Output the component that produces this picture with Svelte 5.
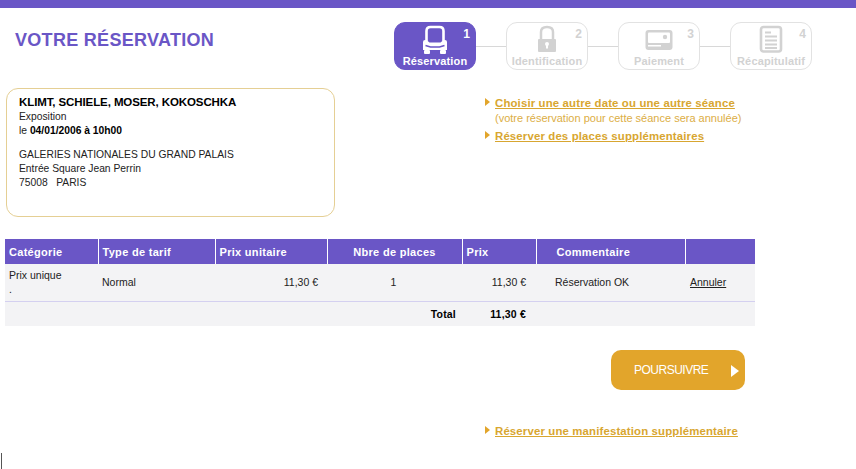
<script>
  const steps = [
    { n: 1, label: "Réservation", icon: "seat" },
    { n: 2, label: "Identification", icon: "lock" },
    { n: 3, label: "Paiement", icon: "card" },
    { n: 4, label: "Récapitulatif", icon: "doc" }
  ];
</script>

<div class="page">
  <div class="topbar"></div>

  <header class="head">
    <h1>VOTRE RÉSERVATION</h1>
    <ol class="steps">
      {#each steps as step, i}
        {#if i > 0}<li class="line" aria-hidden="true"></li>{/if}
        <li class="step" class:active={i === 0}>
          <span class="num">{step.n}</span>
          <svg class="icon" viewBox="0 0 28 30" width="28" height="30" fill="none" stroke="currentColor">
            {#if step.icon === "seat"}
              <path d="M5.500 17V7q0-4 4-4h9q4 0 4 4v10" stroke-width="2.600" />
              <path d="M2 18q0-2 2-2h1.500l3 2.500h11l3-2.500H24q2 0 2 2v8H2z" fill="currentColor" stroke="none" />
              <path d="M4.500 21.500l5 1.500h9l5-1.500" stroke="#6a56c6" stroke-width="1.500" />
              <rect x="3" y="26" width="6" height="4" rx="1" fill="currentColor" stroke="none" />
              <rect x="19" y="26" width="6" height="4" rx="1" fill="currentColor" stroke="none" />
            {:else if step.icon === "lock"}
              <path d="M8 16V8q0-5 6-5t6 5v8" stroke-width="2.500" />
              <rect x="5" y="15" width="18" height="13" rx="1" fill="currentColor" stroke="none" />
              <circle cx="14" cy="20" r="2" fill="#fff" stroke="none" />
              <rect x="13" y="20" width="2" height="4.500" fill="#fff" stroke="none" />
            {:else if step.icon === "card"}
              <rect x="0.500" y="6" width="27" height="20" rx="3" fill="currentColor" stroke="none" />
              <rect x="3" y="8.500" width="22" height="10.500" rx="1" fill="#fff" stroke="none" />
              <circle cx="20" cy="13" r="2.200" fill="currentColor" stroke="none" />
              <rect x="3" y="21" width="13" height="1.500" fill="#fff" stroke="none" />
            {:else}
              <rect x="4" y="3" width="20" height="24.500" rx="2.500" stroke-width="2.600" />
              <path d="M8 8.500h6M8 12.500h12M8 16.500h12M8 20.500h12M8 24h12" stroke-width="1.800" />
            {/if}
          </svg>
          <span class="label">{step.label}</span>
        </li>
      {/each}
    </ol>
  </header>

  <section class="info">
    <div class="event">
      <strong class="name">KLIMT, SCHIELE, MOSER, KOKOSCHKA</strong>
      <p>Exposition</p>
      <p>le <b>04/01/2006 à 10h00</b></p>
      <p class="place">GALERIES NATIONALES DU GRAND PALAIS</p>
      <p>Entrée Square Jean Perrin</p>
      <p>75008 &nbsp; PARIS</p>
    </div>
    <ul class="links">
      <li>
        <a href="#date">Choisir une autre date ou une autre séance</a>
        <span>(votre réservation pour cette séance sera annulée)</span>
      </li>
      <li><a href="#places">Réserver des places supplémentaires</a></li>
    </ul>
  </section>

  <table>
    <thead>
      <tr>
        <th class="c1">Catégorie</th>
        <th class="c2">Type de tarif</th>
        <th class="c3">Prix unitaire</th>
        <th class="c4 center">Nbre de places</th>
        <th class="c5">Prix</th>
        <th class="c6">Commentaire</th>
        <th class="c7"></th>
      </tr>
    </thead>
    <tbody>
      <tr class="row">
        <td>Prix unique<br />.</td>
        <td>Normal</td>
        <td class="right">11,30 €</td>
        <td class="center qty">1</td>
        <td class="right price">11,30 €</td>
        <td class="comment">Réservation OK</td>
        <td class="cancel"><a href="#annuler">Annuler</a></td>
      </tr>
      <tr class="total">
        <td colspan="4" class="right total-label">Total</td>
        <td class="right price">11,30 €</td>
        <td colspan="2"></td>
      </tr>
    </tbody>
  </table>

  <div class="actions">
    <button type="button">POURSUIVRE<i class="arrow"></i></button>
  </div>

  <ul class="links more">
    <li><a href="#manif">Réserver une manifestation supplémentaire</a></li>
  </ul>

  <div class="caret"></div>
</div>

<style>
  :global(body) {
    margin: 0;
    background: #fff;
  }

  .page {
    position: relative;
    height: 469px;
    overflow: hidden;
    font-family: "Liberation Sans", Arial, sans-serif;
    font-size: 10.500px;
    color: #222;
  }

  .topbar {
    height: 8px;
    background: #6a56c6;
  }

  .head {
    display: flex;
    padding: 14px 0 0 15px;
    height: 52px;
  }

  h1 {
    margin: 7px 0 0;
    width: 379px;
    font-size: 18px;
    line-height: 22px;
    font-weight: bold;
    letter-spacing: 0.3px;
    color: #6a56c6;
  }

  .steps {
    display: flex;
    align-items: center;
    margin: 0;
    padding: 0;
    height: 48px;
    list-style: none;
  }

  .line {
    width: 30px;
    height: 1px;
    background: #d8d8d8;
  }

  .step {
    position: relative;
    box-sizing: border-box;
    display: flex;
    flex-direction: column;
    align-items: center;
    width: 82px;
    height: 48px;
    padding-top: 1px;
    border: 1px solid #e2e2e2;
    border-radius: 11px;
    color: #d2d2d2;
  }

  .step.active {
    background: #6a56c6;
    border-color: #6a56c6;
    color: #fff;
  }

  .num {
    position: absolute;
    top: 4px;
    right: 5px;
    font-size: 12px;
    font-weight: bold;
  }

  .icon {
    display: block;
  }

  .label {
    margin-top: 1px;
    font-size: 11px;
    line-height: 13px;
    font-weight: bold;
    letter-spacing: 0.15px;
    white-space: nowrap;
  }

  .info {
    display: flex;
    padding: 14px 0 0 6px;
    height: 133px;
  }

  .event {
    box-sizing: border-box;
    width: 329px;
    height: 129px;
    padding: 6px 12px;
    border: 1px solid #e5cf94;
    border-radius: 12px;
  }

  .event p {
    margin: 0;
    font-size: 10.300px;
    line-height: 14px;
  }

  .name {
    display: block;
    margin-bottom: 1px;
    font-size: 11.500px;
    line-height: 14px;
    letter-spacing: -0.1px;
    color: #000;
  }

  .event b {
    color: #000;
  }

  .event .place {
    margin-top: 10px;
  }

  .links {
    margin: 0;
    padding: 0;
    list-style: none;
    font-size: 11.400px;
  }

  .info .links {
    margin: 8px 0 0 149px;
  }

  .links li {
    position: relative;
    padding-left: 11px;
    margin-bottom: 4px;
  }

  .links li::before {
    content: "";
    position: absolute;
    left: 1px;
    top: 2px;
    border-left: 5px solid #e2a52b;
    border-top: 4.500px solid transparent;
    border-bottom: 4.500px solid transparent;
  }

  .links a {
    display: block;
    font-weight: bold;
    line-height: 14px;
    letter-spacing: 0.15px;
    color: #d8a630;
  }

  .links span {
    display: block;
    margin-top: 2px;
    font-size: 11px;
    line-height: 13px;
    color: #dcae45;
  }

  table {
    margin: 18px 0 0 5px;
    width: 750px;
    table-layout: fixed;
    border-collapse: collapse;
  }

  th {
    box-sizing: border-box;
    height: 25px;
    padding: 0 4px;
    background: #6a56c6;
    border-right: 1px solid #fff;
    color: #fff;
    font-size: 11px;
    font-weight: bold;
    letter-spacing: 0.3px;
    text-align: left;
  }

  th:last-child {
    border-right: 0;
  }

  .c1 { width: 93px; }
  .c2 { width: 117px; }
  .c3 { width: 112px; }
  .c4 { width: 135px; }
  .c5 { width: 74px; }
  .c6 { width: 149px; padding-left: 20px; }

  th.center,
  td.center {
    text-align: center;
  }

  td {
    padding: 0 4px;
    background: #f3f3f5;
    color: #222;
    line-height: 14px;
  }

  td.right {
    text-align: right;
    padding-right: 9px;
  }

  td.right.price {
    padding-right: 10px;
  }

  td.qty {
    padding-right: 6px;
  }

  .row td {
    height: 35px;
    padding-bottom: 2px;
    border-bottom: 1px solid #d4d0f0;
  }

  td.comment {
    padding-left: 19px;
  }

  td.cancel {
    padding-left: 5px;
  }

  .cancel a {
    color: #222;
  }

  .total td {
    height: 24px;
    font-weight: bold;
    letter-spacing: 0.2px;
    color: #000;
  }

  .total td.total-label {
    padding-right: 6px;
  }

  .actions {
    display: flex;
    justify-content: flex-end;
    width: 745px;
    margin-top: 24px;
  }

  button {
    position: relative;
    width: 134px;
    height: 40px;
    padding: 0 0 0 23px;
    border: 0;
    border-radius: 10px;
    background: #e2a52b;
    color: #fff;
    font-family: inherit;
    font-size: 12px;
    letter-spacing: -0.5px;
    text-align: left;
  }

  .arrow {
    position: absolute;
    right: 6px;
    top: 15px;
    border-left: 8px solid #fff;
    border-top: 6px solid transparent;
    border-bottom: 6px solid transparent;
  }

  .links.more {
    margin: 34px 0 0 484px;
  }

  .caret {
    position: absolute;
    left: 1px;
    top: 453px;
    width: 1px;
    height: 16px;
    background: #555;
  }
</style>
